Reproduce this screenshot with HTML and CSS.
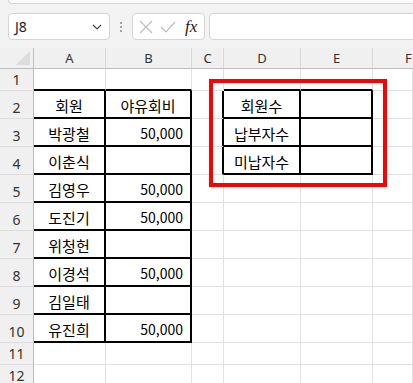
FILE: index.html
```html
<!DOCTYPE html>
<html lang="ko">
<head>
<meta charset="utf-8">
<link rel="stylesheet" href="styles.css">
</head>
<body>
<div class="app">
  <div class="ribbon-edge"></div>
  <div class="formula-bar">
    <div class="name-box">
      <span class="name-text">J8</span>
      <svg class="chev" width="10" height="6" viewBox="0 0 10 6"><path d="M1 1 L5 5 L9 1" fill="none" stroke="#444" stroke-width="1.2"/></svg>
    </div>
    <div class="dots"><span></span><span></span><span></span></div>
    <div class="fx-box">
      <svg class="ico" width="14" height="14" viewBox="0 0 14 14"><path d="M1 1 L13 13 M13 1 L1 13" stroke="#bdbdbd" stroke-width="1.2" fill="none"/></svg>
      <svg class="ico" width="16" height="14" viewBox="0 0 16 14"><path d="M1 7 L6 12 L15 2" stroke="#bdbdbd" stroke-width="1.2" fill="none"/></svg>
      <span class="fx">fx</span>
    </div>
    <div class="formula-input"></div>
  </div>
  <div class="sheet">
    <div class="corner"><span class="tri"></span></div>
    <div class="colhead">A</div><div class="colhead">B</div><div class="colhead">C</div><div class="colhead">D</div><div class="colhead">E</div><div class="colhead last">F</div>

    <div class="rowhead r-s">1</div>
    <div class="cell bb"></div><div class="cell bb"></div><div class="cell"></div><div class="cell bb"></div><div class="cell bb"></div><div class="cell"></div>

    <div class="rowhead">2</div>
    <div class="cell bb br center">회원</div><div class="cell bb br center">야유회비</div><div class="cell br"></div><div class="cell bb br center">회원수</div><div class="cell bb br"></div><div class="cell"></div>

    <div class="rowhead">3</div>
    <div class="cell bb br center">박광철</div><div class="cell bb br num">50,000</div><div class="cell br"></div><div class="cell bb br center">납부자수</div><div class="cell bb br"></div><div class="cell"></div>

    <div class="rowhead">4</div>
    <div class="cell bb br center">이춘식</div><div class="cell bb br num"></div><div class="cell br"></div><div class="cell bb br center">미납자수</div><div class="cell bb br"></div><div class="cell"></div>

    <div class="rowhead">5</div>
    <div class="cell bb br center">김영우</div><div class="cell bb br num">50,000</div><div class="cell"></div><div class="cell"></div><div class="cell"></div><div class="cell"></div>

    <div class="rowhead">6</div>
    <div class="cell bb br center">도진기</div><div class="cell bb br num">50,000</div><div class="cell"></div><div class="cell"></div><div class="cell"></div><div class="cell"></div>

    <div class="rowhead">7</div>
    <div class="cell bb br center">위청헌</div><div class="cell bb br num"></div><div class="cell"></div><div class="cell"></div><div class="cell"></div><div class="cell"></div>

    <div class="rowhead">8</div>
    <div class="cell bb br center">이경석</div><div class="cell bb br num">50,000</div><div class="cell"></div><div class="cell"></div><div class="cell"></div><div class="cell"></div>

    <div class="rowhead">9</div>
    <div class="cell bb br center">김일태</div><div class="cell bb br num"></div><div class="cell"></div><div class="cell"></div><div class="cell"></div><div class="cell"></div>

    <div class="rowhead">10</div>
    <div class="cell bb br center">유진희</div><div class="cell bb br num">50,000</div><div class="cell"></div><div class="cell"></div><div class="cell"></div><div class="cell"></div>

    <div class="rowhead r-s">11</div>
    <div class="cell"></div><div class="cell"></div><div class="cell"></div><div class="cell"></div><div class="cell"></div><div class="cell"></div>

    <div class="rowhead r-s">12</div>
    <div class="cell"></div><div class="cell"></div><div class="cell"></div><div class="cell"></div><div class="cell"></div><div class="cell"></div>
  </div>
  <div class="red-box"></div>
</div>
</body>
</html>
```

FILE: styles.css
```css
* { box-sizing: border-box; }
html, body { margin: 0; padding: 0; }
body {
  width: 413px;
  height: 383px;
  overflow: hidden;
  background: #f3f3f3;
  font-family: "Noto Sans", "Noto Sans CJK KR", sans-serif;
}
.app {
  position: relative;
  width: 413px;
  height: 383px;
  overflow: hidden;
}
.ribbon-edge {
  height: 4px;
  margin-left: 8px;
  background: #fbfbfb;
  border-left: 1px solid #d6d6d6;
  border-bottom: 1px solid #d6d6d6;
  border-bottom-left-radius: 4px;
}
.formula-bar {
  display: flex;
  align-items: center;
  height: 27px;
  margin-top: 9px;
  padding-left: 8px;
}
.name-box {
  width: 102px;
  height: 27px;
  background: #fff;
  border: 1px solid #d4d4d4;
  border-radius: 4px;
  display: flex;
  align-items: center;
  justify-content: space-between;
  padding: 0 7px 0 6px;
}
.name-text {
  font-family: "Noto Sans", sans-serif;
  font-size: 14px;
  color: #222;
}
.dots {
  width: 22px;
  display: flex;
  flex-direction: column;
  align-items: center;
  gap: 2px;
}
.dots span {
  width: 2px;
  height: 2px;
  background: #8a8a8a;
  border-radius: 1px;
}
.fx-box {
  width: 73px;
  height: 27px;
  background: #fff;
  border: 1px solid #d4d4d4;
  border-radius: 4px;
  display: flex;
  align-items: center;
  padding-left: 6px;
  gap: 7px;
}
.fx {
  font-family: "Liberation Serif", serif;
  font-style: italic;
  font-size: 17px;
  color: #222;
  margin-left: 2px;
}
.formula-input {
  flex: 1;
  height: 27px;
  margin-left: 4px;
  margin-right: -6px;
  background: #fff;
  border: 1px solid #d4d4d4;
  border-radius: 4px;
}
.sheet {
  margin-top: 8px;
  display: grid;
  grid-template-columns: 34px 72px 86px 32px 77px 72px 1fr;
  grid-template-rows: 21px 22px repeat(9, 28px) 22px 22px;
  background: #fff;
}
.corner {
  background: #f0f0f0;
  border-right: 1px solid #bdbdbd;
  border-bottom: 1px solid #bdbdbd;
  position: relative;
}
.tri {
  position: absolute;
  right: 3px;
  bottom: 3px;
  width: 0;
  height: 0;
  border-left: 14px solid transparent;
  border-bottom: 14px solid #dcdcdc;
}
.colhead {
  background: #f0f0f0;
  border-right: 1px solid #d9d9d9;
  border-bottom: 1px solid #bdbdbd;
  display: flex;
  align-items: center;
  justify-content: center;
  font-size: 13px;
  color: #333;
}
.colhead.last { justify-content: flex-start; padding-left: 32px; border-right: 0; }
.rowhead {
  background: #f0f0f0;
  border-right: 1px solid #bdbdbd;
  border-bottom: 1px solid #dcdcdc;
  display: flex;
  align-items: flex-end;
  justify-content: center;
  padding-bottom: 1px;
  font-size: 14px;
  color: #333;
}
.cell {
  border-right: 1px solid #e1e1e1;
  border-bottom: 1px solid #e1e1e1;
  display: flex;
  align-items: center;
  font-family: "Noto Sans CJK KR", sans-serif;
  font-size: 15px;
  color: #000;
  white-space: nowrap;
  padding-top: 2px;
}
.cell.center { justify-content: center; }
.cell.num { justify-content: flex-end; padding-right: 7px; font-size: 14px; }
.cell.bb { border-bottom: 2px solid #000; }
.cell.br { border-right: 2px solid #000; }
.red-box {
  position: absolute;
  left: 209px;
  top: 79px;
  width: 178px;
  height: 108px;
  border: 4px solid #ff0000;
}
```
